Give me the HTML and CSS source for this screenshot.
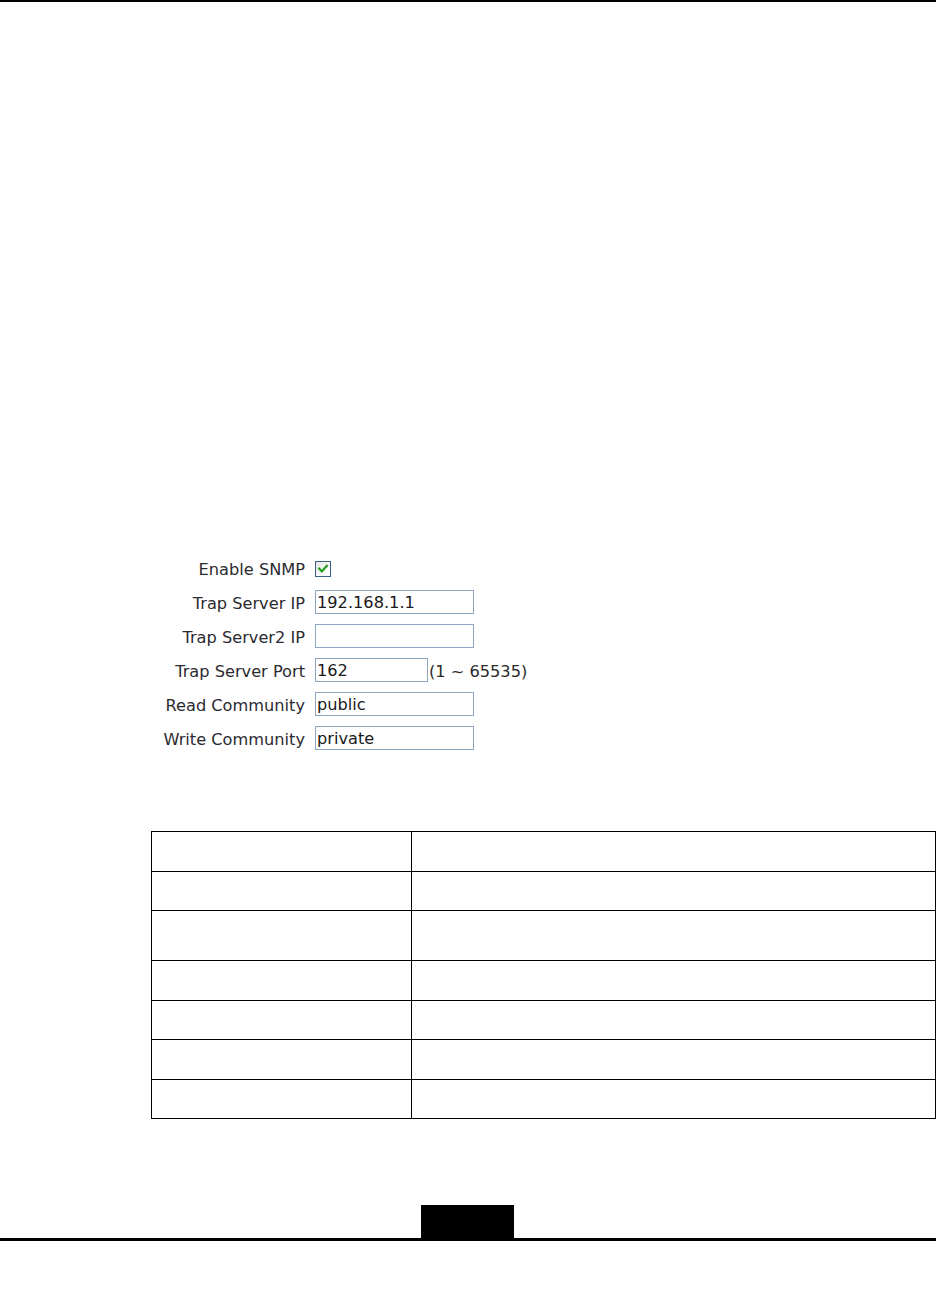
FILE: index.html
```html
<!DOCTYPE html>
<html lang="en">
<head>
<meta charset="utf-8">
<title>SNMP</title>
<link rel="stylesheet" href="styles.css">
</head>
<body>
<div class="topbar"></div>

<form class="snmp-form">
  <div class="row">
    <label class="lbl">Enable SNMP</label>
    <div class="ctrl">
      <span class="checkbox">
        <svg viewBox="0 0 14 14" width="14" height="14"><path d="M3.2 6.6 L5.8 9.4 L10.8 3.8" fill="none" stroke="#21a121" stroke-width="2.2" stroke-linecap="square"/></svg>
      </span>
    </div>
  </div>
  <div class="row">
    <label class="lbl">Trap Server IP</label>
    <div class="ctrl"><span class="field">192.168.1.1</span></div>
  </div>
  <div class="row">
    <label class="lbl">Trap Server2 IP</label>
    <div class="ctrl"><span class="field"></span></div>
  </div>
  <div class="row">
    <label class="lbl">Trap Server Port</label>
    <div class="ctrl"><span class="field short">162</span><span class="hint">(1 ~ 65535)</span></div>
  </div>
  <div class="row">
    <label class="lbl">Read Community</label>
    <div class="ctrl"><span class="field">public</span></div>
  </div>
  <div class="row">
    <label class="lbl">Write Community</label>
    <div class="ctrl"><span class="field">private</span></div>
  </div>
</form>

<table class="grid">
  <tr class="r40"><td class="c1"></td><td></td></tr>
  <tr class="r39"><td class="c1"></td><td></td></tr>
  <tr class="r50"><td class="c1"></td><td></td></tr>
  <tr class="r40"><td class="c1"></td><td></td></tr>
  <tr class="r39"><td class="c1"></td><td></td></tr>
  <tr class="r40"><td class="c1"></td><td></td></tr>
  <tr class="r39"><td class="c1"></td><td></td></tr>
</table>

<div class="footer">
  <div class="pagebox"></div>
  <div class="footline"></div>
</div>
</body>
</html>
```

FILE: styles.css
```css
html, body {
  margin: 0;
  padding: 0;
  background: #ffffff;
}

body {
  font-family: "DejaVu Sans", Verdana, sans-serif;
  color: #2a2a2a;
}

.topbar {
  height: 2px;
  background: #000;
}

.snmp-form {
  margin: 549px 0 0 150px;
  display: flex;
  flex-direction: column;
}

.row {
  display: grid;
  grid-template-columns: 155px auto;
  column-gap: 10px;
  height: 34px;
  align-items: center;
}

.lbl {
  text-align: right;
  font-size: 16.2px;
  white-space: nowrap;
  color: #2b2a30;
  padding-top: 3px;
}

.ctrl {
  display: flex;
  align-items: center;
}

.checkbox {
  box-sizing: border-box;
  width: 16px;
  height: 16px;
  border: 1px solid #3b5f88;
  background: linear-gradient(135deg, #e4e4e0 0%, #ffffff 80%);
  display: flex;
  align-items: center;
  justify-content: center;
  margin-top: 1px;
}

.checkbox svg {
  display: block;
}

.field {
  box-sizing: border-box;
  display: block;
  width: 159px;
  height: 24px;
  border: 1px solid #8da6c2;
  background: #fff;
  font-size: 16.2px;
  line-height: 20px;
  padding: 2px 1px 0;
  color: #1a1a1a;
  white-space: nowrap;
  overflow: hidden;
}

.field.short {
  width: 113px;
}

.hint {
  font-size: 16.2px;
  color: #2a2a2a;
  margin-left: 1px;
  padding-top: 2px;
}

.grid {
  margin: 76px 0 0 151px;
  width: 785px;
  border-collapse: collapse;
  table-layout: fixed;
}

.grid td {
  border: 1px solid #000;
  padding: 0;
}

.grid td.c1 {
  width: 259px;
}

.r40 { height: 40px; }
.r39 { height: 39px; }
.r50 { height: 50px; }

.footer {
  margin-top: 86px;
  display: flex;
  flex-direction: column;
}

.pagebox {
  margin-left: 421px;
  width: 93px;
  height: 33px;
  background: #000;
}

.footline {
  height: 3px;
  background: #000;
}
```
